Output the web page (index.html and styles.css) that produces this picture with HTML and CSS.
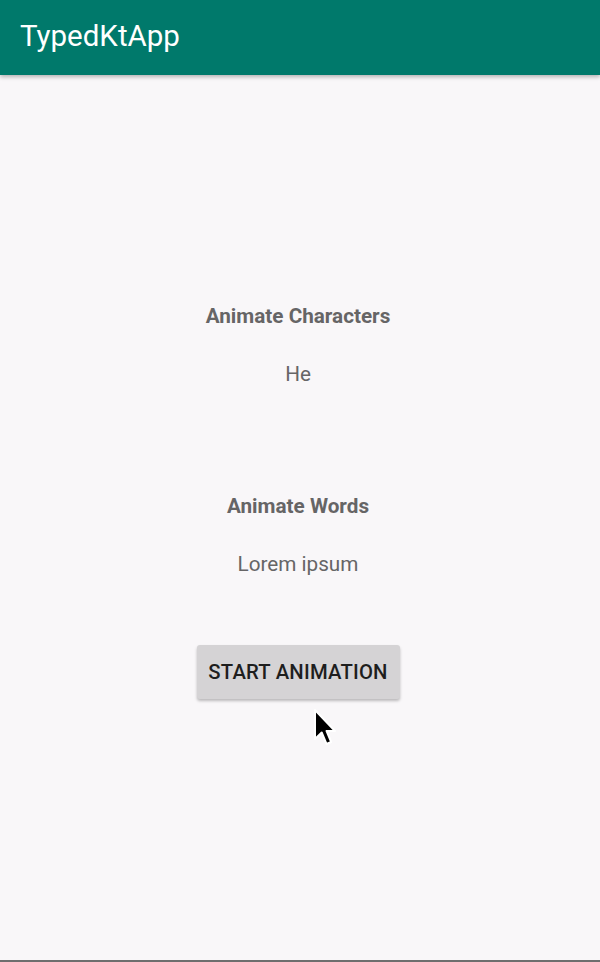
FILE: index.html
```html
<!DOCTYPE html>
<html>
<head>
<meta charset="utf-8">
<link rel="stylesheet" href="styles.css">
</head>
<body>
<div class="screen">
  <header class="appbar"><span class="title">TypedKtApp</span></header>
  <main class="content">
    <section class="block block-chars">
      <h2 class="label">Animate Characters</h2>
      <p class="value">He</p>
    </section>
    <section class="block block-words">
      <h2 class="label">Animate Words</h2>
      <p class="value">Lorem ipsum</p>
    </section>
    <div class="btn-wrap">
      <button class="btn">START ANIMATION</button>
      <svg class="cursor" width="24" height="38" viewBox="0 0 24 38">
        <path d="M2 1 L2 30 L8.7 23.5 L13.5 35 L18.2 33 L13.6 22 L22 22 Z" fill="#000" stroke="#fff" stroke-width="2" stroke-linejoin="round"/>
      </svg>
    </div>
  </main>
  <div class="bottom-line"></div>
</div>
</body>
</html>
```
FILE: styles.css
```css
html, body {
  margin: 0;
  padding: 0;
}
body {
  background: #f9f7f9;
  font-family: Roboto, "Noto Sans", sans-serif;
}
.screen {
  width: 600px;
  height: 962px;
  display: flex;
  flex-direction: column;
  position: relative;
  overflow: hidden;
}
.appbar {
  height: 75px;
  background: #00796b;
  display: flex;
  align-items: center;
  padding-left: 20px;
  box-shadow: 0 2px 4px rgba(0,0,0,0.28);
  position: relative;
  z-index: 1;
  flex: none;
}
.title {
  color: #fff;
  font-size: 29.5px;
  font-weight: 400;
  margin-top: -4px;
}
.content {
  flex: 1;
  display: flex;
  flex-direction: column;
  align-items: center;
  padding-top: 227px;
  padding-right: 4px;
}
.block {
  display: flex;
  flex-direction: column;
  align-items: center;
}
.block-words {
  margin-top: 104px;
}
.label {
  margin: 0;
  font-size: 20.7px;
  font-weight: 700;
  color: #666566;
  line-height: 28px;
}
.value {
  margin: 30px 0 0 0;
  font-size: 20.7px;
  font-weight: 400;
  color: #666566;
  line-height: 28px;
}
.btn-wrap {
  margin-top: 67px;
  position: relative;
}
.btn {
  width: 203px;
  height: 54px;
  background: #d5d3d5;
  border: none;
  border-radius: 3px;
  box-shadow: 0 2px 3px rgba(0,0,0,0.25);
  font-family: Roboto, "Noto Sans", sans-serif;
  font-size: 20.3px;
  font-weight: 500;
  color: #1e1e1e;
  padding: 0;
  letter-spacing: 0.2px;
}
.cursor {
  position: absolute;
  left: 116px;
  top: 64px;
}
.bottom-line {
  height: 2px;
  background: #6e6e6e;
  flex: none;
}
```
